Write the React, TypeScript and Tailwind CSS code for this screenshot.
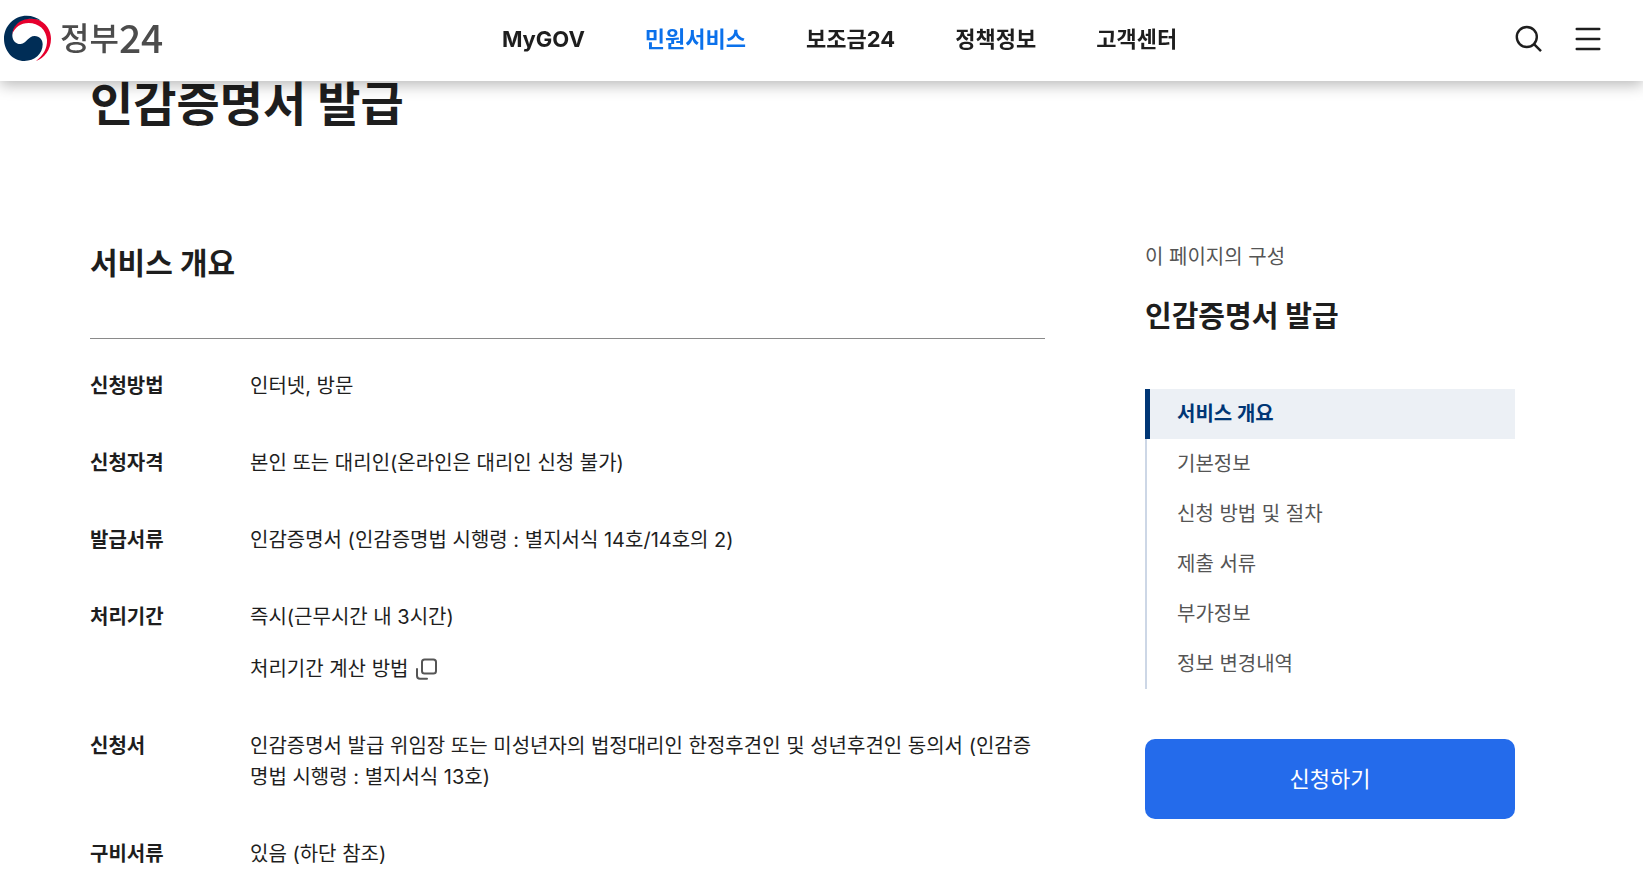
import type { ReactNode } from 'react';

interface NavItem {
  label: string;
  active?: boolean;
}

interface OverviewRow {
  term: string;
  detail: ReactNode;
}

const MENU: NavItem[] = [
  { label: 'MyGOV' },
  { label: '민원서비스', active: true },
  { label: '보조금24' },
  { label: '정책정보' },
  { label: '고객센터' },
];

const SECTIONS: NavItem[] = [
  { label: '서비스 개요', active: true },
  { label: '기본정보' },
  { label: '신청 방법 및 절차' },
  { label: '제출 서류' },
  { label: '부가정보' },
  { label: '정보 변경내역' },
];

const ROWS: OverviewRow[] = [
  { term: '신청방법', detail: '인터넷, 방문' },
  { term: '신청자격', detail: '본인 또는 대리인(온라인은 대리인 신청 불가)' },
  { term: '발급서류', detail: '인감증명서 (인감증명법 시행령 : 별지서식 14호/14호의 2)' },
  {
    term: '처리기간',
    detail: (
      <>
        <p>즉시(근무시간 내 3시간)</p>
        <button type="button" className="mt-[21px] flex items-center gap-1.5">
          처리기간 계산 방법
          <PopupIcon />
        </button>
      </>
    ),
  },
  {
    term: '신청서',
    detail:
      '인감증명서 발급 위임장 또는 미성년자의 법정대리인 한정후견인 및 성년후견인 동의서 (인감증명법 시행령 : 별지서식 13호)',
  },
  { term: '구비서류', detail: '있음 (하단 참조)' },
];

function GovEmblem() {
  return (
    <svg viewBox="9 45 144 141" className="w-12 h-[47px] shrink-0" aria-hidden="true">
      <path
        fill="#e6002d"
        d="M36 104C38 72 62 55 92 55C128 56 153 84 153 116C153 150 132 174 108 183C130 166 142 145 141 120C139 89 116 69 86 69C62 69 44 82 36 104Z"
      />
      <path
        fill="#002d56"
        d="M124 63C98 51 66 56 49 74C41 82 36 94 37 108C38 124 50 133 62 132C80 131 84 108 104 108C119 108 128 119 128 133C128 162 104 183 73 183C38 183 12 152 12 116C12 78 42 47 80 47C97 47 112 53 124 63Z"
      />
    </svg>
  );
}

function SearchIcon() {
  return (
    <svg viewBox="0 0 28 28" className="w-7 h-7" fill="none" stroke="#1e1e1e" strokeWidth="2.4">
      <circle cx="12.8" cy="12" r="10" />
      <path d="M20 19.2L27 26.2" />
    </svg>
  );
}

function MenuIcon() {
  return (
    <svg viewBox="0 0 28 28" className="w-7 h-7" fill="none" stroke="#1e1e1e" strokeWidth="2.4" strokeLinecap="round">
      <path d="M2.7 4H25.3M2.7 14H25.3M2.7 24H25.3" />
    </svg>
  );
}

function PopupIcon() {
  return (
    <svg viewBox="0 0 24 24" className="w-6 h-6" fill="none" stroke="#555" strokeWidth="2">
      <rect x="8" y="1.4" width="14" height="14.2" rx="2.6" />
      <path d="M3 11V17.8Q3 20.8 6 20.8H13" strokeLinecap="round" />
    </svg>
  );
}

function Header() {
  return (
    <header className="fixed inset-x-0 top-0 z-10 h-[81px] flex items-center bg-white pl-[3px] pr-[41px] shadow-[0_4px_14px_rgba(0,0,0,0.28)]">
      <div className="flex-1 pb-1">
        <a href="#home" className="flex items-center gap-[9px]">
          <GovEmblem />
          <span className="flex items-center pb-1.5 font-['Noto_Sans_CJK_KR',sans-serif] font-medium text-[#4c4c4c] leading-10">
            <span className="text-[32px]">정부</span>
            <span className="text-[39px]">24</span>
          </span>
        </a>
      </div>
      <nav className="pl-[74px] pb-1">
        <ul className="flex gap-[60px] text-[22px] leading-8 font-bold">
          {MENU.map((item) => (
            <li key={item.label}>
              <a href="#menu" className={item.active ? 'text-[#0b71eb]' : ''}>{item.label}</a>
            </li>
          ))}
        </ul>
      </nav>
      <div className="flex-1 flex justify-end gap-8 pb-1">
        <button type="button" aria-label="검색"><SearchIcon /></button>
        <button type="button" aria-label="전체메뉴"><MenuIcon /></button>
      </div>
    </header>
  );
}

function Sidebar() {
  return (
    <aside className="w-[370px] shrink-0">
      <p className="pt-0.5 text-[#555] leading-[31px]">이 페이지의 구성</p>
      <h2 className="mt-6 text-[29px] leading-10 font-bold">인감증명서 발급</h2>
      <ul className="mt-[52px]">
        {SECTIONS.map((item) => (
          <li key={item.label}>
            <a href="#section"
              className={`flex items-center h-[50px] ${
                item.active
                  ? 'border-l-[5px] border-[#003675] bg-[#ecf0f5] pl-[27px] font-bold text-[#003675]'
                  : 'border-l-2 border-[#cdd7e6] pl-[30px] text-[#555]'
              }`}>
              {item.label}
            </a>
          </li>
        ))}
      </ul>
      <button type="button"
        className="mt-[50px] w-full h-20 rounded-[10px] bg-[#246beb] text-[22px] text-white">
        신청하기
      </button>
    </aside>
  );
}

export default function App() {
  return (
    <div className="min-h-screen overflow-hidden bg-white text-[#1e1e1e] text-[20px] leading-[31px] font-['Inter','Noto_Sans_CJK_KR',sans-serif]">
      <Header />
      <main className="h-screen overflow-hidden pl-[90px] pr-[128px] pt-[70px]">
        <h1 className="text-[47px] leading-[68px] font-bold">인감증명서 발급</h1>
        <div className="mt-[102px] flex items-start gap-[100px]">
          <section className="flex-1 min-w-0">
            <h2 className="pt-[3px] pb-[55px] text-[30px] leading-10 font-bold border-b border-[#8a8a8a]">서비스 개요</h2>
            <dl className="pt-8 space-y-[46px]">
              {ROWS.map((row) => (
                <div key={row.term} className="flex">
                  <dt className="w-40 shrink-0 font-bold">{row.term}</dt>
                  <dd className="flex-1 min-w-0">{row.detail}</dd>
                </div>
              ))}
            </dl>
          </section>
          <Sidebar />
        </div>
      </main>
    </div>
  );
}
